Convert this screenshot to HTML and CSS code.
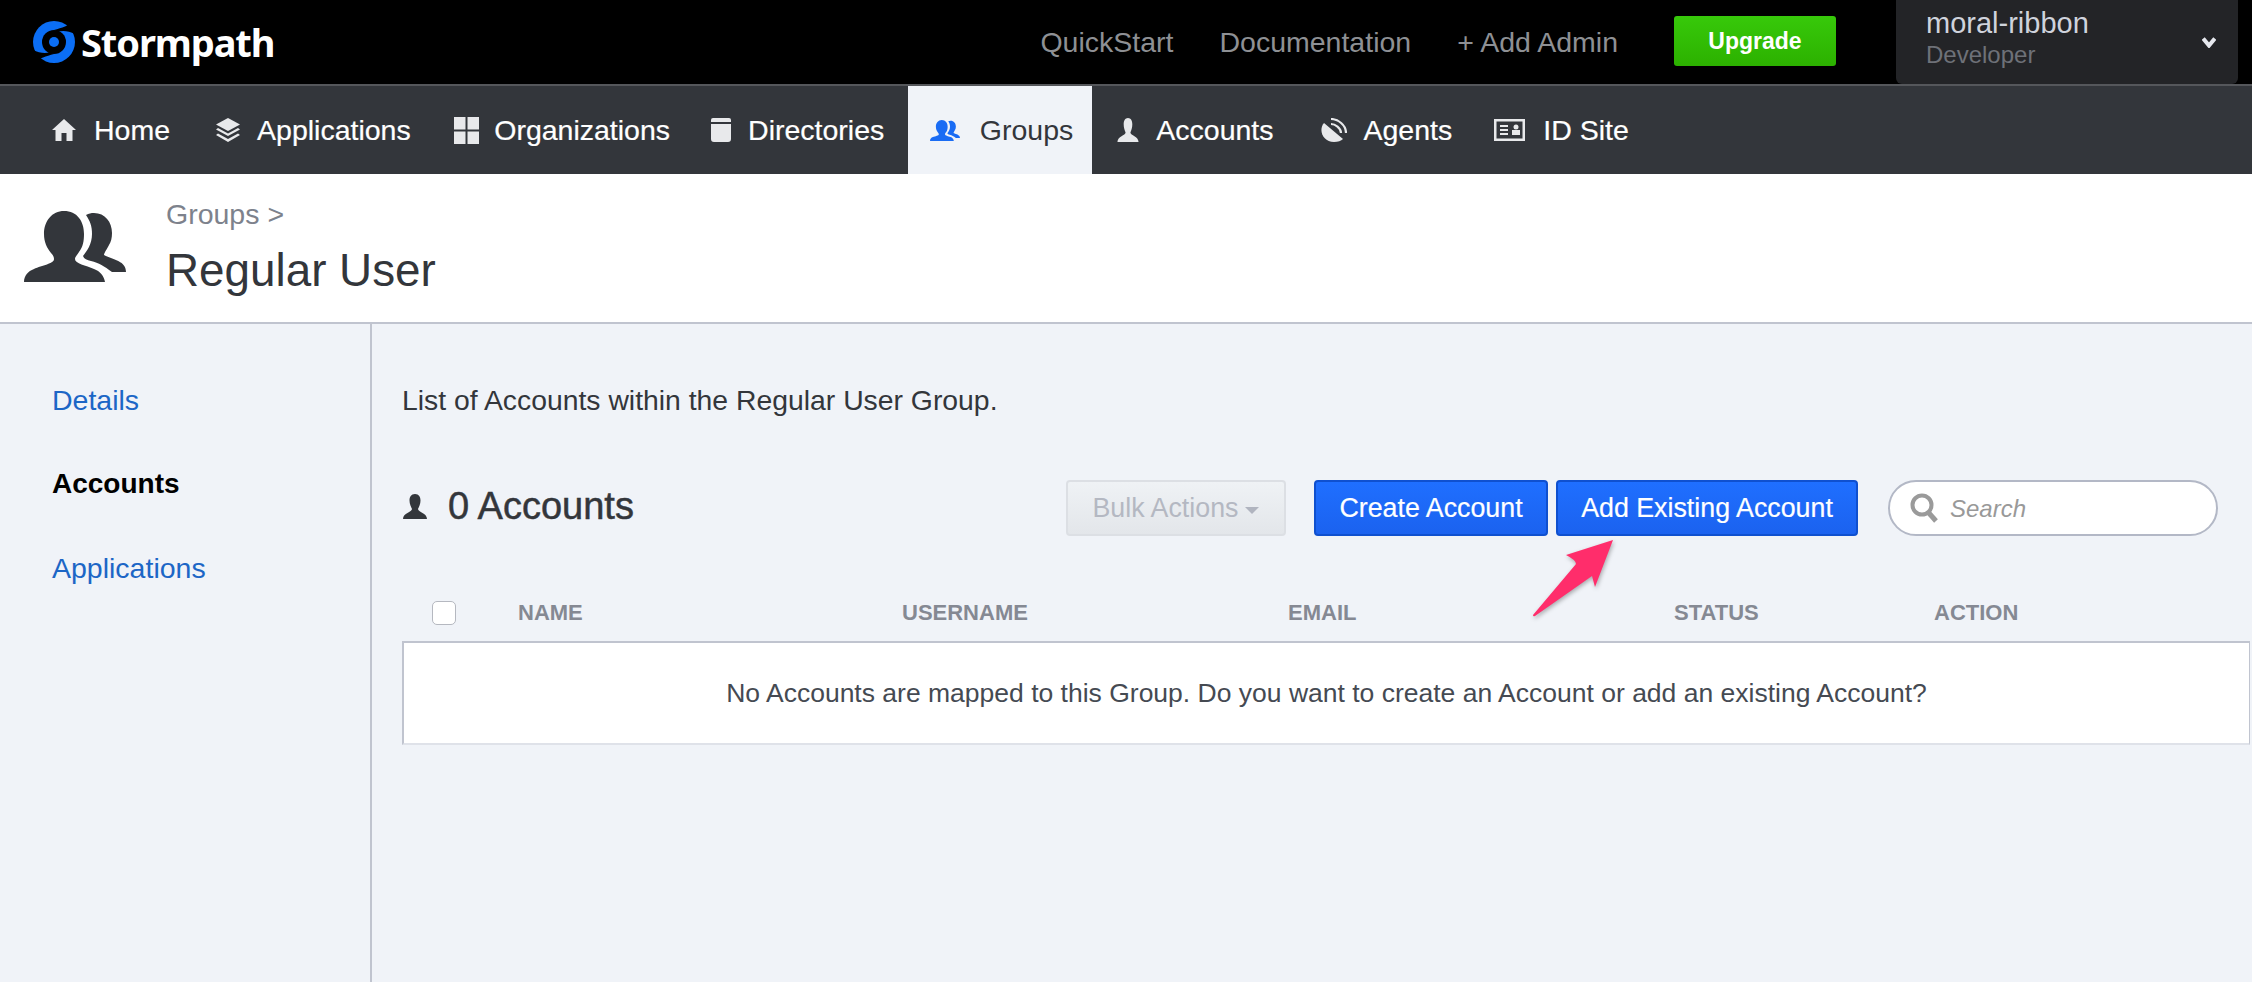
FILE: index.html
```html
<!DOCTYPE html>
<html lang="en">
<head>
<meta charset="utf-8">
<title>Stormpath - Regular User</title>
<link rel="stylesheet" href="styles.css">
</head>
<body>
<header class="topbar">
  <a class="logo">
    <svg class="logo-mark" viewBox="0 0 44 44"><circle cx="22" cy="22" r="21" fill="#0b6ef5"/><circle cx="22" cy="22" r="12" fill="#000"/><circle cx="22" cy="22" r="5" fill="#0b6ef5"/><path d="M22 10 C30 8 37 5 41 3 L43 14 C37 11 30 10 26 12 Z M22 34 C14 36 7 39 4 40 L1 30 C7 33 14 34 18 32 Z" fill="#000"/></svg>
    <span class="logo-text">Stormpath</span>
  </a>
  <nav class="toplinks">
    <a>QuickStart</a>
    <a>Documentation</a>
    <a>+ Add Admin</a>
  </nav>
  <a class="upgrade">Upgrade</a>
  <div class="tenant">
    <div>
      <div class="tenant-name">moral-ribbon</div>
      <div class="tenant-role">Developer</div>
    </div>
    <svg class="tenant-caret" viewBox="0 0 12 10"><path d="M1 2 L6 8 L11 2" fill="none" stroke="#e6e8ee" stroke-width="3.500"/></svg>
  </div>
</header>
<nav class="mainnav">
  <a class="nav-item nav-home"><svg class="ic ic-home" viewBox="0 0 24 22"><path d="M12 0 L24 11 H20.500 V22 H14.500 V14 H9.500 V22 H3.500 V11 H0 Z" fill="currentColor"/></svg>Home</a>
  <a class="nav-item"><svg class="ic ic-apps" viewBox="0 0 26 24"><path d="M13 0 L25 6.500 L13 13 L1 6.500 Z" fill="currentColor"/><path d="M3 10 L13 15.500 L23 10 L25 11.500 L13 18 L1 11.500 Z" fill="currentColor"/><path d="M3 15.500 L13 21 L23 15.500 L25 17 L13 24 L1 17 Z" fill="currentColor"/></svg>Applications</a>
  <a class="nav-item nav-orgs"><svg class="ic ic-orgs" viewBox="0 0 25 27"><path d="M0 0 H11.500 V12.500 H0 Z M13.500 0 H25 V12.500 H13.500 Z M0 14.500 H11.500 V27 H0 Z M13.500 14.500 H25 V27 H13.500 Z" fill="currentColor"/></svg>Organizations</a>
  <a class="nav-item"><svg class="ic ic-dirs" viewBox="0 0 20 24"><path d="M2 0 H18 Q20 0 20 2 V4 H0 V2 Q0 0 2 0 Z M0 6 H20 V21 Q20 24 17 24 H3 Q0 24 0 21 Z" fill="currentColor"/></svg>Directories</a>
  <a class="nav-item active"><svg class="ic ic-groups" viewBox="0 0 102 71"><path d="M88 22 C88 11 81 2 70 2 C67 2 65 2.500 62 4 C66 10 68 15 68 23 C68 33 63 40 59 45 C60 48 63 49 67 50 C75 52 80 55 88 61 H102 C102 50 90 49 80 44 C80 42 83 38 85 34 C87 31 88 27 88 22 Z" fill="currentColor"/><path d="M40 0 C28 0 20 10 20 23 C20 31 23 37 27 42 C29 44 30 46 30 48 C30 53 18 54 10 58 C4 60 0 65 0 71 H81 C80 65 76 60 70 58 C62 54 51 53 51 48 C51 46 53 44 55 41 C59 36 60 30 60 23 C60 10 53 0 40 0 Z" fill="currentColor"/></svg>Groups</a>
  <a class="nav-item nav-accounts"><svg class="ic ic-person" viewBox="0 0 24 25"><path d="M12 0 C9 0 7.500 3 7.500 6.500 C7.500 10 8.500 13 9.500 15 C9.500 18 1 19 1 25 H23 C23 19 14.500 18 14.500 15 C15.500 13 16.500 10 16.500 6.500 C16.500 3 15 0 12 0 Z" fill="currentColor"/></svg>Accounts</a>
  <a class="nav-item nav-agents"><svg class="ic ic-agents" viewBox="0 0 27 24"><path d="M4 5 C-2 12 3 24 14 24 Q20 24 23 21 Z" fill="currentColor"/><path d="M11 1 C18 1 26 7 26 15 M11 6 C15 6 21 10 21 15" fill="none" stroke="currentColor" stroke-width="2.200"/></svg>Agents</a>
  <a class="nav-item"><svg class="ic ic-idsite" viewBox="0 0 31 22"><path fill-rule="evenodd" d="M0 0 H31 V22 H0 Z M2.500 2.500 V19.500 H28.500 V2.500 Z" fill="currentColor"/><path d="M6 6 H14 V8 H6 Z M6 10 H14 V12 H6 Z M6 14 H14 V16 H6 Z M18 11 H26 V16 H18 Z" fill="currentColor"/><circle cx="22" cy="8" r="2.500" fill="currentColor"/></svg>ID Site</a>
</nav>
<section class="pagehead">
  <svg class="pagehead-icon" viewBox="0 0 102 71"><path d="M88 22 C88 11 81 2 70 2 C67 2 65 2.500 62 4 C66 10 68 15 68 23 C68 33 63 40 59 45 C60 48 63 49 67 50 C75 52 80 55 88 61 H102 C102 50 90 49 80 44 C80 42 83 38 85 34 C87 31 88 27 88 22 Z" fill="#33363b"/><path d="M40 0 C28 0 20 10 20 23 C20 31 23 37 27 42 C29 44 30 46 30 48 C30 53 18 54 10 58 C4 60 0 65 0 71 H81 C80 65 76 60 70 58 C62 54 51 53 51 48 C51 46 53 44 55 41 C59 36 60 30 60 23 C60 10 53 0 40 0 Z" fill="#33363b"/></svg>
  <div>
    <div class="crumb">Groups &gt;</div>
    <h1 class="title">Regular User</h1>
  </div>
</section>
<main class="layout">
  <aside class="sidebar">
    <a class="side-link">Details</a>
    <a class="side-link current">Accounts</a>
    <a class="side-link">Applications</a>
  </aside>
  <section class="content">
    <p class="intro">List of Accounts within the Regular User Group.</p>
    <div class="toolbar">
      <h2 class="count"><svg class="count-icon" viewBox="0 0 24 25"><path d="M12 0 C8 0 6.500 3 6.500 6.500 C6.500 10 8 13 9 15 C9 18 0 19 0 25 H24 C24 19 15 18 15 15 C16 13 17.500 10 17.500 6.500 C17.500 3 16 0 12 0 Z" fill="#33363b"/></svg>0 Accounts</h2>
      <button class="btn btn-muted">Bulk Actions<span class="caret"></span></button>
      <button class="btn btn-primary btn-create">Create Account</button>
      <button class="btn btn-primary btn-add">Add Existing Account</button>
      <div class="search">
        <svg class="search-icon" viewBox="0 0 28 30"><circle cx="12" cy="12" r="9.500" fill="none" stroke="#9a9a9a" stroke-width="4"/><path d="M18 19 L26 28" stroke="#9a9a9a" stroke-width="5"/></svg>
        <span class="search-text">Search</span>
      </div>
    </div>
    <div class="thead">
      <span class="check-cell"><span class="checkbox"></span></span>
      <span>NAME</span>
      <span>USERNAME</span>
      <span>EMAIL</span>
      <span>STATUS</span>
      <span>ACTION</span>
    </div>
    <div class="empty">No Accounts are mapped to this Group. Do you want to create an Account or add an existing Account?</div>
  </section>
  <svg class="arrow" viewBox="0 0 92 85"><path d="M81 1 L34 16 Q44 21 44 25 L1 76 Q1 78 3 77 L60 37 L63 48 Z" fill="#ff2d6b"/></svg>
</main>
</body>
</html>
```
FILE: styles.css
```css
* { box-sizing: border-box; }
html, body { margin: 0; padding: 0; height: 100%; overflow: hidden; }
body { font-family: "Liberation Sans", Arial, sans-serif; background: #f0f3f8; color: #33363b; }
a { color: inherit; text-decoration: none; }

.topbar { height: 84px; background: #000; display: flex; align-items: center; }
.logo { display: flex; align-items: center; margin-left: 32px; }
.logo-mark { width: 44px; height: 44px; }
.logo-text { font-family: "Noto Sans", sans-serif; font-weight: 700; font-size: 38px; color: #fff; margin-left: 5px; line-height: 1; letter-spacing: -1.1px; }
.toplinks { display: flex; gap: 46px; margin-left: auto; font-size: 28.500px; color: #8e9094; }
.upgrade { width: 162px; height: 50px; margin: -2px 0 0 56px; background: linear-gradient(#37c90a, #2cb100); border-radius: 3px; color: #fff; font-size: 23px; font-weight: 700; display: flex; align-items: center; justify-content: center; }
.tenant { width: 342px; height: 84px; margin: 0 14px 0 60px; background: #232427; border-radius: 0 0 6px 6px; padding: 7px 22px 0 30px; display: flex; align-items: flex-start; justify-content: space-between; align-self: flex-start; }
.tenant-name { font-size: 29px; color: #cfd3dc; line-height: 32px; }
.tenant-role { font-size: 24px; color: #6e7178; line-height: 32px; }
.tenant-caret { width: 14px; height: 12px; margin-top: 29px; }

.mainnav { height: 90px; background: #33363b; border-top: 2px solid #55575b; display: flex; padding-left: 52px; }
.nav-item { display: flex; align-items: center; font-size: 28.500px; color: #fff; margin-right: 42.500px; height: 88px; -webkit-text-stroke: 0.2px #fff; }
.nav-item .ic { margin-right: 16px; color: #e8e9eb; flex: none; }
.nav-home { margin-right: 45px; }
.nav-orgs { margin-right: 40px; }
.nav-accounts { margin-right: 46px; }
.nav-agents { margin-right: 42px; }
.ic-home { width: 24px; height: 22px; margin-right: 18px !important; }
.ic-apps { width: 26px; height: 24px; }
.ic-orgs { width: 27px; height: 27px; margin-right: 14px !important; }
.ic-dirs { width: 22px; height: 24px; }
.ic-person { width: 24px; height: 24px; }
.ic-agents { width: 27px; height: 24px; margin-right: 17px !important; }
.ic-idsite { width: 31px; height: 22px; margin-right: 18px !important; }
.nav-item.active { background: #f0f3f8; color: #33363b; width: 184px; padding-left: 22px; margin-left: -19px; margin-right: 24.500px; -webkit-text-stroke: 0; }
.nav-item.active .ic-groups { width: 30px; height: 21px; color: #1a6cf4; margin-right: 20px; }

.pagehead { height: 150px; background: #fff; border-bottom: 2px solid #c0c4cf; display: flex; align-items: flex-start; padding: 24px 0 0 24px; }
.pagehead-icon { width: 102px; height: 71px; margin: 13px 40px 0 0; }
.crumb { font-size: 28.500px; color: #7d828c; line-height: 32px; }
.title { margin: 16px 0 0; font-size: 45.800px; font-weight: 400; line-height: 50px; color: #33363b; }

.layout { position: relative; display: flex; height: 658px; }
.sidebar { width: 372px; border-right: 2px solid #c0c4cf; padding: 60px 0 0 52px; display: flex; flex-direction: column; gap: 52px; flex: none; }
.side-link { font-size: 28.500px; line-height: 32px; color: #1c66c6; }
.side-link.current { color: #000; font-weight: 700; font-size: 28px; }

.content { flex: 1; padding: 58px 2px 0 30px; }
.intro { margin: 0; font-size: 28.350px; line-height: 36px; color: #33363b; }
.toolbar { display: flex; align-items: center; margin-top: 62px; height: 56px; }
.count { flex: 1; display: flex; align-items: center; margin: -4px 0 0; font-size: 38px; font-weight: 400; color: #33363b; -webkit-text-stroke: 0.5px #33363b; }
.count-icon { width: 26px; height: 25px; margin-right: 20px; }
.btn { height: 56px; font-family: inherit; font-size: 26.800px; border-radius: 4px; padding: 0; }
.btn-muted { width: 220px; margin-right: 28px; color: #b4b8c2; background: linear-gradient(#eff2f5, #e3e6ea); border: 2px solid #dcdfe4; }
.caret { display: inline-block; margin-left: 7px; vertical-align: 3px; border-left: 7px solid transparent; border-right: 7px solid transparent; border-top: 7px solid #b0b4bf; }
.btn-primary { color: #fff; background: linear-gradient(#1f6fff, #1b62ef); border: 2px solid #0f50cf; -webkit-text-stroke: 0.2px #fff; }
.btn-create { width: 234px; margin-right: 8px; }
.btn-add { width: 302px; margin-right: 30px; }
.search { width: 330px; height: 56px; border: 2px solid #b3b8c6; border-radius: 28px; background: #fff; display: flex; align-items: center; padding-left: 20px; margin-right: 32px; }
.search-icon { width: 28px; height: 30px; margin-right: 12px; }
.search-text { font-size: 24px; font-style: italic; color: #999; margin-top: 2px; }

.thead { display: grid; grid-template-columns: 116px 384px 386px 386px 260px 1fr; align-items: center; margin-top: 49px; height: 56px; font-size: 22px; font-weight: 700; color: #858993; }
.check-cell { padding-left: 30px; display: flex; }
.checkbox { width: 24px; height: 24px; background: #fff; border: 1px solid #b5b8c0; border-radius: 5px; }
.empty { height: 104px; background: #fff; border: 2px solid #c0c4cf; border-right-width: 1px; border-bottom-color: #dfe2e9; display: flex; align-items: center; justify-content: center; font-size: 26.500px; color: #454a52; }

.arrow { position: absolute; left: 1532px; top: 215px; width: 92px; height: 85px; filter: drop-shadow(1px 2px 2px rgba(0,0,0,.3)); }
```
